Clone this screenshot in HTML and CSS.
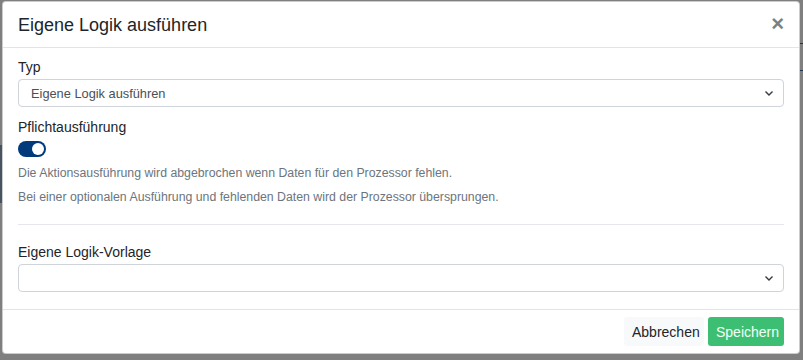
FILE: index.html
```html
<!DOCTYPE html>
<html lang="de">
<head>
    <meta charset="UTF-8">
    <title>Eigene Logik ausführen</title>
    <link rel="stylesheet" href="styles.css">
</head>
<body>
    <div class="page-edge left"></div>
    <div class="page-edge right"></div>
    <div class="modal">
        <div class="modal-header">
            <h5 class="modal-title">Eigene Logik ausführen</h5>
            <button class="close" type="button">&times;</button>
        </div>
        <div class="modal-body">
            <label class="form-label">Typ</label>
            <div class="select">
                <span>Eigene Logik ausführen</span>
                <svg class="chevron" width="10" height="8" viewBox="0 0 10 8"><path d="M1.5 2.5 L5 6 L8.5 2.5" fill="none" stroke="#343a40" stroke-width="1.4"/></svg>
            </div>

            <label class="form-label second">Pflichtausführung</label>
            <div class="switch"><span class="knob"></span></div>
            <p class="help">Die Aktionsausführung wird abgebrochen wenn Daten für den Prozessor fehlen.</p>
            <p class="help">Bei einer optionalen Ausführung und fehlenden Daten wird der Prozessor übersprungen.</p>

            <hr>

            <label class="form-label">Eigene Logik-Vorlage</label>
            <div class="select">
                <span></span>
                <svg class="chevron" width="10" height="8" viewBox="0 0 10 8"><path d="M1.5 2.5 L5 6 L8.5 2.5" fill="none" stroke="#343a40" stroke-width="1.4"/></svg>
            </div>
        </div>
        <div class="modal-footer">
            <button class="btn btn-light" type="button">Abbrechen</button>
            <button class="btn btn-success" type="button">Speichern</button>
        </div>
    </div>
</body>
</html>
```

FILE: styles.css
```css
* {
    margin: 0;
    padding: 0;
    box-sizing: border-box;
    font-family: 'Liberation Sans', Arial, sans-serif;
}

body {
    background: #7f7f7f;
    min-height: 100vh;
    padding: 1px 3px 0 2px;
}

.page-edge {
    position: absolute;
    width: 3px;
    background: #1f3550;
}

.page-edge.left {
    left: 0;
    top: 145px;
    height: 58px;
    opacity: 0.6;
}

.page-edge.right {
    right: 0;
    top: 43px;
    height: 28px;
    background: transparent;
    border-top: 1px solid #1f3550;
    border-bottom: 1px solid #1f3550;
}

.modal {
    position: relative;
    background: #fff;
    border: 1px solid rgba(0, 0, 0, 0.2);
    border-radius: 4px;
    height: 353px;
    display: flex;
    flex-direction: column;
}

.modal-header {
    display: flex;
    justify-content: space-between;
    align-items: center;
    height: 46px;
    padding: 0 15px 0 15px;
    border-bottom: 1px solid #e2e5e8;
}

.modal-title {
    font-size: 18px;
    font-weight: 400;
    color: #212529;
    line-height: 1;
}

.close {
    background: none;
    border: none;
    font-size: 22px;
    font-weight: 700;
    color: #000;
    opacity: 0.5;
    line-height: 1;
    margin-top: -1px;
    cursor: pointer;
}

.modal-body {
    flex: 1;
    padding: 9px 15px 0 15px;
}

.form-label {
    display: block;
    font-size: 14px;
    line-height: 21px;
    color: #212529;
    margin-bottom: 1px;
}

.form-label.second {
    margin-top: 10px;
    margin-bottom: 3px;
}

.select {
    display: flex;
    justify-content: space-between;
    align-items: center;
    height: 28px;
    border: 1px solid #ced4da;
    border-radius: 4px;
    padding: 0 9px 0 12px;
    font-size: 12.8px;
    color: #495057;
}

.chevron {
    display: block;
}

.switch {
    width: 28px;
    height: 16px;
    border-radius: 8px;
    background: #003a7a;
    display: flex;
    justify-content: flex-end;
    align-items: center;
    padding-right: 2px;
    margin-bottom: 6px;
}

.knob {
    width: 12px;
    height: 12px;
    border-radius: 50%;
    background: #fff;
}

.help {
    font-size: 12.3px;
    line-height: 20px;
    color: #6c757d;
    margin-bottom: 4px;
}

hr {
    border: none;
    border-top: 1px solid #e5e7ea;
    margin: 17px 0 17px 0;
}

.modal-footer {
    display: flex;
    justify-content: flex-end;
    align-items: center;
    gap: 4px;
    height: 44px;
    padding: 0 15px 0 15px;
    border-top: 1px solid #e2e5e8;
}

.btn {
    height: 29px;
    padding: 0 8px;
    font-size: 14px;
    border: none;
    border-radius: 3px;
    cursor: pointer;
}

.btn-light {
    background: #f8f9fa;
    color: #212529;
    width: 80px;
}

.btn-success {
    background: #3dbf73;
    color: #f2fff6;
    width: 76px;
}
```
